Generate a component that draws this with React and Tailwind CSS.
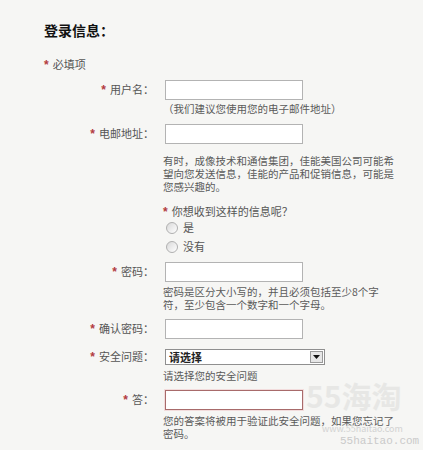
import React from 'react';

const Star = () => (
  <span className="mr-[4px] font-['Liberation_Sans',sans-serif] font-bold text-[12px] text-[#b23a40]">*</span>
);

const FieldRow = ({ label, className = '', children }) => (
  <div className={`flex items-center ${className}`}>
    <div className="w-[154px] shrink-0 text-right text-[11px] leading-[13px] text-[#555]">
      <Star />
      {label}：
    </div>
    <div className="ml-[11px]">{children}</div>
  </div>
);

const TextInput = ({ error }) => (
  <div
    className={`h-[20px] w-[138px] bg-white border ${
      error ? 'border-[#a86b6b] shadow-[0_0_0_1px_#f2dcdc]' : 'border-[#b3b3b3]'
    }`}
  />
);

const Hint = ({ className = '', children }) => (
  <div className={`ml-[163px] text-[10.5px] leading-[13px] text-[#5a5a5a] ${className}`}>
    {children}
  </div>
);

const Radio = ({ label }) => (
  <div className="ml-[166px] flex h-[19px] items-center">
    <div className="h-[12px] w-[12px] rounded-full border border-[#b0b0b0] bg-gradient-to-br from-[#d9d9d9] to-[#ffffff]" />
    <span className="ml-[5px] text-[11px] leading-[13px] text-[#555]">{label}</span>
  </div>
);

const App = () => {
  return (
    <div className="relative h-[450px] w-[423px] overflow-hidden bg-[#f6f6f4] pt-[20px] font-['Noto_Sans_CJK_SC','Noto_Sans',sans-serif]">
      {/* Header */}
      <div className="ml-[44px] h-[20px] text-[14px] font-bold leading-[20px] text-[#111]">登录信息：</div>

      <div className="ml-[44px] mt-[18px] h-[13px] text-[11px] leading-[13px] text-[#555]">
        <Star />
        必填项
      </div>

      {/* Username */}
      <FieldRow label="用户名" className="mt-[9px]">
        <TextInput />
      </FieldRow>
      <Hint className="mt-[2px]">（我们建议您使用您的电子邮件地址）</Hint>

      {/* Email */}
      <FieldRow label="电邮地址" className="mt-[9px]">
        <TextInput />
      </FieldRow>
      <Hint className="mt-[10px]">
        有时，成像技术和通信集团，佳能美国公司可能希
        <br />
        望向您发送信息，佳能的产品和促销信息，可能是
        <br />
        您感兴趣的。
      </Hint>

      <div className="ml-[163px] mt-[12px] h-[13px] text-[11px] leading-[13px] text-[#555]">
        <Star />
        你想收到这样的信息呢？
      </div>
      <Radio label="是" />
      <Radio label="没有" />

      {/* Password */}
      <FieldRow label="密码" className="mt-[6px]">
        <TextInput />
      </FieldRow>
      <Hint className="mt-[3px]">
        密码是区分大小写的，并且必须包括至少8个字
        <br />
        符，至少包含一个数字和一个字母。
      </Hint>

      <FieldRow label="确认密码" className="mt-[8px]">
        <TextInput />
      </FieldRow>

      {/* Security question */}
      <FieldRow label="安全问题" className="mt-[10px]">
        <div className="flex h-[16px] w-[160px] items-center justify-between border border-[#8f8f8f] bg-white pl-[3px]">
          <span className="text-[11px] font-semibold leading-[14px] text-[#222]">请选择</span>
          <div className="mr-[1px] flex h-[12px] w-[13px] items-center justify-center border border-[#9a9a9a] bg-[#e6e6e6]">
            <svg width="7" height="4" viewBox="0 0 7 4">
              <path d="M0 0h7L3.5 4z" fill="#111" />
            </svg>
          </div>
        </div>
      </FieldRow>
      <Hint className="mt-[4px]">请选择您的安全问题</Hint>

      <FieldRow label="答" className="mt-[8px]">
        <TextInput error />
      </FieldRow>
      <Hint className="mt-[4px]">
        您的答案将被用于验证此安全问题，如果您忘记了
        <br />
        密码。
      </Hint>

      {/* Watermark */}
      <div className="pointer-events-none absolute left-[306px] top-[378px] text-[30px] font-bold leading-[34px] text-[#e2e2e0] opacity-70">
        55海淘
      </div>
      <div className="pointer-events-none absolute left-[322px] top-[424px] text-[9px] leading-[10px] text-[#d2d2d2]">
        www.55haitao.com
      </div>
      <div className="pointer-events-none absolute left-[340px] top-[435px] font-['Liberation_Mono',monospace] text-[11px] leading-[12px] text-[#cacaca]">
        55haitao.com
      </div>
    </div>
  );
};

export default App;
